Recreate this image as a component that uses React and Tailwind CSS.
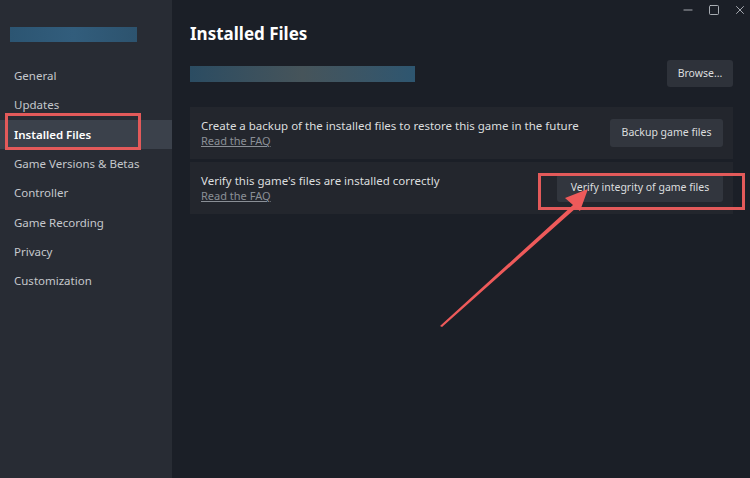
import { Minus, Square, X } from "lucide-react";

const navItems = [
  "General",
  "Updates",
  "Installed Files",
  "Game Versions & Betas",
  "Controller",
  "Game Recording",
  "Privacy",
  "Customization",
];

function Row({ text, button, highlight }) {
  return (
    <div className="flex items-center justify-between bg-[#23262d] pl-[11px] pr-[10px] h-[52px]">
      <div className="flex flex-col leading-[15px]">
        <span className="text-[11.5px] text-[#dcdedf]">{text}</span>
        <span className="text-[11px] text-[#8a8f96] underline">Read the FAQ</span>
      </div>
      <button
        className={
          "h-[28px] rounded-[3px] bg-[#32363e] text-[10.5px] text-[#dcdedf] " +
          (highlight ? "w-[166px]" : "w-[113px]")
        }
      >
        {button}
      </button>
    </div>
  );
}

export default function App() {
  return (
    <div
      className="relative flex h-[478px] w-[750px] overflow-hidden bg-[#1b1f27]"
      style={{ fontFamily: '"Noto Sans", "Open Sans", sans-serif' }}
    >
      <aside className="flex w-[172px] flex-col bg-[#282c34] pt-[27px]">
        <div className="mx-[10px] h-[15px] w-[127px] bg-gradient-to-r from-[#2c5572] via-[#325d7c] to-[#2d536e]" />
        <nav className="mt-[19px] flex flex-col">
          {navItems.map((item) => (
            <div
              key={item}
              className={
                "flex h-[29.3px] items-center pl-[14px] text-[11.5px] " +
                (item === "Installed Files"
                  ? "bg-[#3b414b] font-semibold text-white"
                  : "text-[#c5c8cc]")
              }
            >
              {item}
            </div>
          ))}
        </nav>
      </aside>

      <main className="flex flex-1 flex-col pl-[18px] pr-[17px]">
        <div className="flex h-[20px] items-start justify-end gap-[13px] pt-[3px] text-[#b8bcc2]">
          <Minus size={14} strokeWidth={1.5} />
          <Square size={12} strokeWidth={1.8} className="mt-[1px]" />
          <X size={14} strokeWidth={1.5} className="-mr-[14px]" />
        </div>
        <h1 className="mt-[2px] text-[17px] font-bold leading-[24px] text-white">Installed Files</h1>
        <div className="mt-[14px] flex items-center justify-between">
          <div className="h-[16px] w-[225px] bg-gradient-to-r from-[#2b4c62] via-[#46545a] to-[#2e5670]" />
          <button className="h-[27px] w-[66px] rounded-[3px] bg-[#2e323a] text-[10.5px] text-[#dcdedf]">
            Browse...
          </button>
        </div>
        <div className="mt-[20px] flex flex-col gap-[3px]">
          <Row
            text="Create a backup of the installed files to restore this game in the future"
            button="Backup game files"
          />
          <Row
            text="Verify this game's files are installed correctly"
            button="Verify integrity of game files"
            highlight
          />
        </div>
      </main>

      {/* annotations */}
      <div className="absolute left-[5px] top-[113px] h-[37px] w-[136px] border-[3px] border-[#e35a5a]" />
      <div className="absolute left-[538px] top-[173px] h-[37px] w-[207px] border-[3px] border-[#e35a5a]" />
      <svg className="absolute left-0 top-0" width="750" height="478">
        <polygon points="440,326 573,205 565,198 588,189 580,211 576,208 442,327" fill="#ee5a5a" />
      </svg>
    </div>
  );
}
